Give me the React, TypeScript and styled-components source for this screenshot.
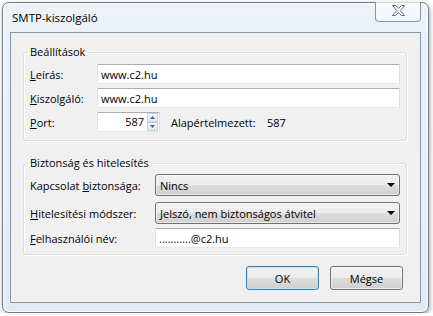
import React from "react";
import styled, { createGlobalStyle } from "styled-components";

const GlobalStyle = createGlobalStyle`
  html, body { margin: 0; padding: 0; background: #ffffff; }
  body {
    font-family: "Open Sans", "Noto Sans", sans-serif;
    font-size: 11px;
    color: #000;
  }
  * { box-sizing: border-box; }
`;

const Window = styled.div`
  margin: 2px 0 0 2px;
  width: 427px;
  height: 311px;
  display: flex;
  flex-direction: column;
  padding: 0 7px 9px 7px;
  border: 1px solid #6f7b89;
  border-radius: 7px;
  background: linear-gradient(#edf2f9, #e2eaf4);
  box-shadow: 1px 2px 5px rgba(0, 0, 0, 0.35), inset 0 0 0 1px rgba(255, 255, 255, 0.85);
`;

const TitleBar = styled.div`
  height: 29px;
  display: flex;
  align-items: flex-start;
  justify-content: space-between;
`;

const Title = styled.div`
  padding: 7px 0 0 2px;
  font-size: 11.5px;
  line-height: 16px;
`;

const CloseButton = styled.div`
  margin-top: -1px;
  width: 46px;
  height: 20px;
  border: 1px solid #8a95a4;
  border-top: none;
  border-radius: 0 0 4px 4px;
  background: linear-gradient(rgba(255, 255, 255, 0.7), rgba(255, 255, 255, 0.25));
  display: flex;
  align-items: center;
  justify-content: center;
  padding-bottom: 2px;
`;

const Client = styled.div`
  flex: 1;
  border: 1px solid #8896a8;
  background: #f0f0f0;
  padding: 11px 13px 0 12px;
  display: flex;
  flex-direction: column;
`;

const GroupBox = styled.fieldset<{ $top?: number; $pt: number; $pb: number }>`
  margin: ${(p) => p.$top ?? 0}px 0 0 0;
  padding: ${(p) => p.$pt}px 6px ${(p) => p.$pb}px 6px;
  border: 1px solid #d5dfe5;
  border-radius: 3px;
  box-shadow: inset 1px 1px 0 #ffffff, 1px 1px 0 #ffffff;
  min-width: 0;
`;

const Legend = styled.legend`
  padding: 0 2px;
  margin-left: -2px;
  line-height: 16px;
  font-size: 11px;
`;

const FormGrid = styled.div<{ $label: number }>`
  display: grid;
  grid-template-columns: ${(p) => p.$label}px 1fr;
  align-items: center;
`;

const Label = styled.div<{ $top?: number }>`
  margin-top: ${(p) => p.$top ?? 0}px;
  white-space: nowrap;
`;

const Key = styled.span`
  text-decoration: underline;
`;

const TextBox = styled.input<{ $top?: number }>`
  margin-top: ${(p) => p.$top ?? 0}px;
  height: 20px;
  width: 100%;
  border: 1px solid;
  border-color: #abadb3 #dbdfe6 #e3e9ef #e2e3ea;
  background: #ffffff;
  padding: 0 3px;
  font: inherit;
  color: #000;
  outline: none;
`;

const PortRow = styled.div<{ $top?: number }>`
  margin-top: ${(p) => p.$top ?? 0}px;
  display: flex;
  align-items: center;
`;

const NumBox = styled.div`
  width: 63px;
  height: 20px;
  display: flex;
  border: 1px solid;
  border-color: #abadb3 #dbdfe6 #e3e9ef #e2e3ea;
  background: #ffffff;
`;

const NumField = styled.div`
  flex: 1;
  text-align: right;
  padding-right: 2px;
  line-height: 18px;
`;

const SpinCol = styled.div`
  width: 11px;
  margin: 0 1px 0 1px;
  display: flex;
  flex-direction: column;
`;

const SpinButton = styled.div`
  flex: 1;
  border: 1px solid #c3d1e2;
  background: linear-gradient(#f3f7fc, #dfe8f3);
  display: flex;
  align-items: center;
  justify-content: center;
`;

const DefaultLabel = styled.div`
  margin-left: 11px;
  width: 96px;
`;

const Select = styled.div<{ $top?: number }>`
  margin-top: ${(p) => p.$top ?? 0}px;
  height: 22px;
  border: 1px solid #707070;
  border-radius: 3px;
  background: linear-gradient(#f2f2f2 0%, #ebebeb 50%, #dddddd 50%, #cfcfcf 100%);
  box-shadow: inset 0 0 0 1px rgba(255, 255, 255, 0.55);
  display: flex;
  align-items: center;
  justify-content: space-between;
  padding: 0 4px 0 4px;
`;

const ButtonRow = styled.div`
  margin-top: 11px;
  display: flex;
  justify-content: flex-end;
  gap: 11px;
  padding-right: 4px;
`;

const Button = styled.div<{ $default?: boolean }>`
  width: 73px;
  height: 24px;
  border: 1px solid ${(p) => (p.$default ? "#3c7fb1" : "#707070")};
  border-radius: 3px;
  background: linear-gradient(#f2f2f2 0%, #ebebeb 50%, #dddddd 50%, #cfcfcf 100%);
  box-shadow: inset 0 0 0 1px ${(p) => (p.$default ? "#b9e5f8" : "rgba(255,255,255,0.6)")};
  display: flex;
  align-items: center;
  justify-content: center;
`;

const CloseIcon = () => (
  <svg width="13" height="11" viewBox="0 0 13 11">
    <path
      d="M0.5 0.5 H3.5 L6.5 3.3 L9.5 0.5 H12.5 L8.3 5.5 L12.5 10.5 H9.5 L6.5 7.7 L3.5 10.5 H0.5 L4.7 5.5 Z"
      fill="#ffffff"
      stroke="#5f6b7c"
      strokeWidth="1"
      strokeLinejoin="round"
    />
  </svg>
);

const Arrow = ({ up, color }: { up?: boolean; color: string }) => (
  <svg width="5" height="3" viewBox="0 0 5 3">
    <path d={up ? "M0 3 L2.5 0 L5 3 Z" : "M0 0 L5 0 L2.5 3 Z"} fill={color} />
  </svg>
);

const DropArrow = () => (
  <svg width="8" height="4" viewBox="0 0 8 4">
    <path d="M0 0 H8 L4 4 Z" fill="#000" />
  </svg>
);

export default function App() {
  return (
    <>
      <GlobalStyle />
      <Window>
        <TitleBar>
          <Title>SMTP-kiszolgáló</Title>
          <CloseButton>
            <CloseIcon />
          </CloseButton>
        </TitleBar>
        <Client>
          <GroupBox $pt={4} $pb={8}>
            <Legend>Beállítások</Legend>
            <FormGrid $label={67}>
              <Label>
                <Key>L</Key>eírás:
              </Label>
              <TextBox readOnly value="www.c2.hu" />
              <Label $top={4}>
                <Key>K</Key>iszolgáló:
              </Label>
              <TextBox $top={4} readOnly value="www.c2.hu" />
              <Label $top={4}>
                <Key>P</Key>ort:
              </Label>
              <PortRow $top={4}>
                <NumBox>
                  <NumField>587</NumField>
                  <SpinCol>
                    <SpinButton>
                      <Arrow up color="#4a5f80" />
                    </SpinButton>
                    <SpinButton>
                      <Arrow color="#4a5f80" />
                    </SpinButton>
                  </SpinCol>
                </NumBox>
                <DefaultLabel>Alapértelmezett:</DefaultLabel>
                <div>587</div>
              </PortRow>
            </FormGrid>
          </GroupBox>
          <GroupBox $top={14} $pt={3} $pb={6}>
            <Legend>Biztonság és hitelesítés</Legend>
            <FormGrid $label={125}>
              <Label>
                Kapcsolat <Key>b</Key>iztonsága:
              </Label>
              <Select>
                <span>Nincs</span>
                <DropArrow />
              </Select>
              <Label $top={6}>
                <Key>H</Key>itelesítési módszer:
              </Label>
              <Select $top={6}>
                <span>Jelszó, nem biztonságos átvitel</span>
                <DropArrow />
              </Select>
              <Label $top={4}>
                <Key>F</Key>elhasználói név:
              </Label>
              <TextBox $top={4} readOnly value="...........@c2.hu" />
            </FormGrid>
          </GroupBox>
          <ButtonRow>
            <Button $default>OK</Button>
            <Button>Mégse</Button>
          </ButtonRow>
        </Client>
      </Window>
    </>
  );
}
